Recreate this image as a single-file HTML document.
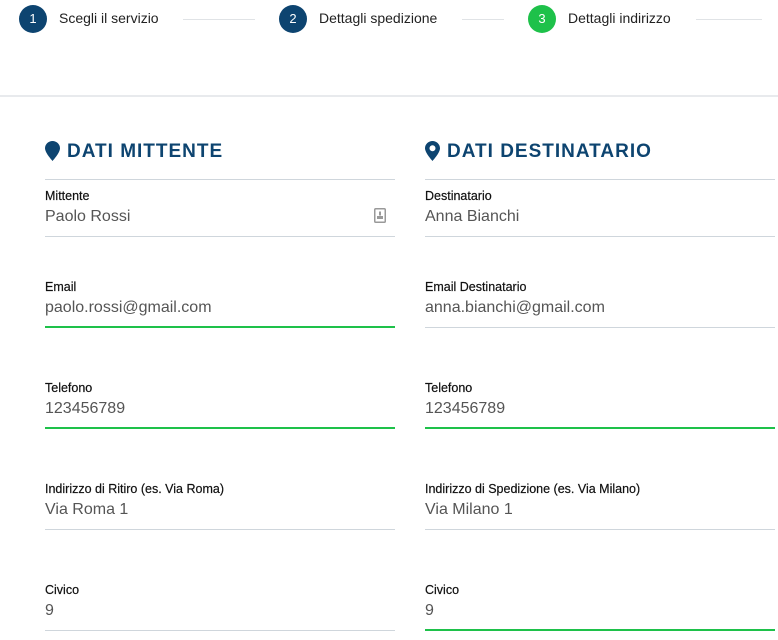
<!DOCTYPE html>
<html><head><meta charset="utf-8"><style>
*{margin:0;padding:0;box-sizing:border-box}
body{width:778px;height:640px;overflow:hidden;background:#fff;font-family:"Liberation Sans",sans-serif;position:relative}
.a{position:absolute}
.c{width:28px;height:28px;border-radius:50%;background:#0d4470;color:#fff;font-size:13px;line-height:28px;text-align:center}
.st{font-size:14px;color:#222}
.ln{height:1px;background:#e0e3e6}
.h{font-size:19px;font-weight:bold;color:#0d4470;letter-spacing:1px}
.lb{font-size:12.5px;color:#111;-webkit-text-stroke:0.2px #111}
.v{font-size:16px;color:#555}
.u{height:1px;background:#cfd6dc}
.g{height:2px;background:#1ec14a}
</style></head><body>
<div class="a c" style="left:19px;top:5px">1</div>
<div class="a st" style="left:59px;top:10px">Scegli il servizio</div>
<div class="a ln" style="left:183px;top:19px;width:72px"></div>
<div class="a c" style="left:279px;top:5px">2</div>
<div class="a st" style="left:319px;top:10px">Dettagli spedizione</div>
<div class="a ln" style="left:462px;top:19px;width:42px"></div>
<div class="a c" style="left:528px;top:5px;background:#1ec14a">3</div>
<div class="a st" style="left:568px;top:10px">Dettagli indirizzo</div>
<div class="a ln" style="left:696px;top:19px;width:66px"></div>
<div class="a" style="left:0;top:95px;width:778px;height:2px;background:#e8eaed"></div>

<svg class="a" style="left:45px;top:141px" width="15" height="20" viewBox="0 0 15 20"><path d="M7.5 0C3.4 0 0 3.2 0 7.3 0 12 7.5 20 7.5 20S15 12 15 7.3C15 3.2 11.6 0 7.5 0z" fill="#0d4470"/></svg>
<div class="a h" style="left:67px;top:141px">DATI MITTENTE</div>
<svg class="a" style="left:425px;top:141px" width="15" height="20" viewBox="0 0 15 20"><path d="M7.5 0C3.4 0 0 3.2 0 7.3 0 12 7.5 20 7.5 20S15 12 15 7.3C15 3.2 11.6 0 7.5 0zm0 4.3a3 3 0 110 6 3 3 0 010-6z" fill="#0d4470" fill-rule="evenodd"/></svg>
<div class="a h" style="left:447px;top:141px">DATI DESTINATARIO</div>

<div class="a u" style="left:45px;top:179px;width:350px"></div>
<div class="a u" style="left:425px;top:179px;width:350px"></div>

<div class="a lb" style="left:45px;top:189px">Mittente</div>
<div class="a v" style="left:45px;top:208px">Paolo Rossi</div>
<svg class="a" style="left:374px;top:208px" width="12" height="15" viewBox="0 0 12 15"><rect x="0.75" y="0.75" width="10.5" height="13.5" rx="1" fill="none" stroke="#999" stroke-width="1.5"/><rect x="5" y="3.5" width="2" height="4" fill="#999"/><rect x="3" y="8" width="6" height="3" fill="#999"/></svg>
<div class="a u" style="left:45px;top:236px;width:350px"></div>
<div class="a lb" style="left:425px;top:189px">Destinatario</div>
<div class="a v" style="left:425px;top:208px">Anna Bianchi</div>
<div class="a u" style="left:425px;top:236px;width:350px"></div>

<div class="a lb" style="left:45px;top:280px">Email</div>
<div class="a v" style="left:45px;top:299px">paolo.rossi@gmail.com</div>
<div class="a g" style="left:45px;top:326px;width:350px"></div>
<div class="a lb" style="left:425px;top:280px">Email Destinatario</div>
<div class="a v" style="left:425px;top:299px">anna.bianchi@gmail.com</div>
<div class="a u" style="left:425px;top:327px;width:350px"></div>

<div class="a lb" style="left:45px;top:381px">Telefono</div>
<div class="a v" style="left:45px;top:400px">123456789</div>
<div class="a g" style="left:45px;top:427px;width:350px"></div>
<div class="a lb" style="left:425px;top:381px">Telefono</div>
<div class="a v" style="left:425px;top:400px">123456789</div>
<div class="a g" style="left:425px;top:427px;width:350px"></div>

<div class="a lb" style="left:45px;top:482px">Indirizzo di Ritiro (es. Via Roma)</div>
<div class="a v" style="left:45px;top:501px">Via Roma 1</div>
<div class="a u" style="left:45px;top:529px;width:350px"></div>
<div class="a lb" style="left:425px;top:482px">Indirizzo di Spedizione (es. Via Milano)</div>
<div class="a v" style="left:425px;top:501px">Via Milano 1</div>
<div class="a u" style="left:425px;top:529px;width:350px"></div>

<div class="a lb" style="left:45px;top:583px">Civico</div>
<div class="a v" style="left:45px;top:602px">9</div>
<div class="a u" style="left:45px;top:630px;width:350px"></div>
<div class="a lb" style="left:425px;top:583px">Civico</div>
<div class="a v" style="left:425px;top:602px">9</div>
<div class="a g" style="left:425px;top:629px;width:350px"></div>
</body></html>
